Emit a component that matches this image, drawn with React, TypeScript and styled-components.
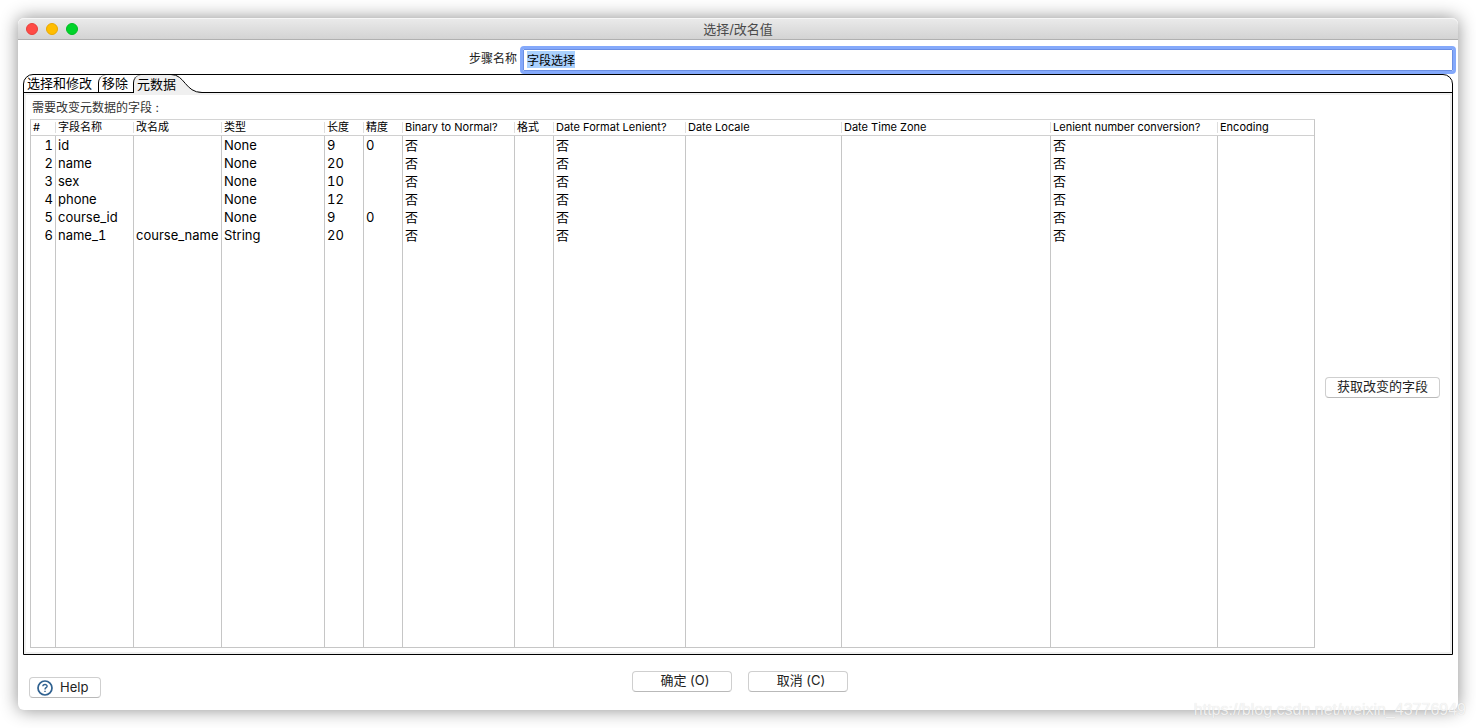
import React, { useEffect, useRef } from "react";
import styled, { createGlobalStyle } from "styled-components";

const GlobalStyle = createGlobalStyle`
  *, *::before, *::after { box-sizing: border-box; }
  body {
    margin: 0;
    background: #fff;
    color: #000;
    font-family: Inter, "Noto Sans CJK SC", sans-serif;
    font-size: 13px;
  }
`;

const Desktop = styled.div`
  position: relative;
  display: flex;
  min-height: 100vh;
  padding: 18px;
  overflow: hidden;
`;

const Window = styled.main`
  flex: 1;
  min-width: 0;
  display: flex;
  flex-direction: column;
  border-radius: 6px;
  background: #fff;
  box-shadow: 0 0 18px rgba(0, 0, 0, 0.45);
`;

const TitleBar = styled.header`
  position: relative;
  display: flex;
  align-items: center;
  justify-content: center;
  height: 22px;
  border-bottom: 1px solid #b0b0b0;
  border-radius: 6px 6px 0 0;
  background: linear-gradient(#ebebeb, #d3d3d3);
  box-shadow: inset 0 1px 0 #f6f6f6;
`;

const Title = styled.h1`
  margin: 0;
  font-size: 13px;
  font-weight: 400;
  line-height: 20px;
  color: #4a4a4a;
`;

const Lights = styled.div`
  position: absolute;
  left: 8px;
  top: 5px;
  display: flex;
  gap: 8px;
`;

const Light = styled.button<{ $fill: string; $edge: string }>`
  width: 12px;
  height: 12px;
  padding: 0;
  border: 1px solid ${(p) => p.$edge};
  border-radius: 50%;
  background: ${(p) => p.$fill};
`;

const NameRow = styled.div`
  display: flex;
  align-items: flex-start;
  gap: 6px;
  padding: 9px 5px 3px;
`;

const NameLabel = styled.label`
  width: 494px;
  text-align: right;
  font-size: 12px;
  line-height: 20px;
  color: #222;
`;

const NameInput = styled.input`
  flex: 1;
  min-width: 0;
  height: 22px;
  padding: 0 3px 2px;
  border: 1px solid #6b8fe3;
  outline: 3px solid #84a9fb;
  border-radius: 1px;
  background: #fff;
  color: #000;
  font-family: inherit;
  font-size: 12px;
  line-height: 16px;
  &::selection { background: #a9d0fd; color: #000; }
`;

const Folder = styled.section`
  flex: 1;
  display: flex;
  flex-direction: column;
  margin: 0 5px;
  border: 1px solid #000;
  border-radius: 10px 10px 0 0;
`;

const TabList = styled.div`
  display: flex;
  height: 18px;
  border-bottom: 1px solid #000;
`;

const Tab = styled.button<{ $active?: boolean; $first?: boolean }>`
  position: relative;
  height: ${(p) => (p.$active ? 18 : 17)}px;
  padding: 0 ${(p) => (p.$active ? 0 : p.$first ? 6 : 5)}px 0 3px;
  border: 0;
  border-left: ${(p) => (p.$first ? 0 : 1)}px solid #000;
  border-radius: 8px 0 0 0;
  background: ${(p) => (p.$active ? "#f0f0f0" : "transparent")};
  color: #000;
  font-family: inherit;
  font-size: 13px;
  white-space: nowrap;
`;

const TabText = styled.span`
  position: relative;
  z-index: 1;
  display: block;
  height: 17px;
  line-height: 16px;
`;

const TabTail = styled.svg`
  position: absolute;
  left: 34px;
  top: -1px;
  width: 34px;
  height: 19px;
`;

const Panel = styled.div`
  flex: 1;
  display: flex;
  flex-direction: column;
  padding: 4px 10px 4px 4px;
  border: 2px solid #f0f0f0;
`;

const Caption = styled.h2`
  height: 20px;
  margin: 0;
  padding: 0 2px;
  font-size: 12px;
  font-weight: 400;
  line-height: 18px;
  color: #333;
`;

const Body = styled.div`
  flex: 1;
  display: flex;
  gap: 10px;
`;

const Grid = styled.table`
  flex: 1;
  min-width: 0;
  table-layout: fixed;
  border-collapse: separate;
  border-spacing: 0;
  border: 1px solid #c6c6c6;
  border-top-color: #d4d4d4;
`;

const HeadCell = styled.th`
  position: relative;
  height: 16px;
  padding: 0 2px;
  border-bottom: 1px solid #d0d0d0;
  text-align: left;
  font-size: 11px;
  font-weight: 400;
  line-height: 15px;
  white-space: nowrap;
  &:not(:last-child)::after {
    content: "";
    position: absolute;
    right: 0;
    top: 2px;
    bottom: 2px;
    border-right: 1px solid #dedede;
  }
`;

const Cell = styled.td<{ $number?: boolean }>`
  height: 18px;
  padding: 0 2px;
  text-align: ${(p) => (p.$number ? "right" : "left")};
  font-size: 13px;
  font-variant-numeric: tabular-nums;
  line-height: 18px;
  white-space: nowrap;
  &:not(:last-child) { border-right: 1px solid #c6c6c6; }
`;

const FillCell = styled.td`
  padding: 0;
  &:not(:last-child) { border-right: 1px solid #c6c6c6; }
`;

const Side = styled.div`
  display: flex;
  align-items: center;
  padding-top: 8px;
`;

const PushButton = styled.button<{ $wide?: boolean }>`
  display: flex;
  align-items: center;
  justify-content: center;
  height: 21px;
  min-width: ${(p) => (p.$wide ? 100 : 0)}px;
  padding: 0 11px 3px ${(p) => (p.$wide ? 17 : 11)}px;
  border: 1px solid #cfcfcf;
  border-bottom-color: #b9b9b9;
  border-radius: 4px;
  background: #fff;
  color: #222;
  font-family: inherit;
  font-size: 13px;
  line-height: 16px;
  white-space: nowrap;
`;

const HelpButton = styled(PushButton)`
  justify-self: start;
  gap: 7px;
  margin-top: 6px;
  padding: 0 12px 0 7px;
`;

const HelpText = styled.span`
  height: 18px;
`;

const Footer = styled.footer`
  display: grid;
  grid-template-columns: 1fr auto 1fr;
  align-items: start;
  padding: 16px 7px 12px 11px;
`;

const Actions = styled.div`
  display: flex;
  gap: 16px;
`;

const Watermark = styled.div`
  position: absolute;
  right: 10px;
  top: 700px;
  font-family: "Liberation Sans", sans-serif;
  font-size: 16px;
  line-height: 20px;
  color: rgba(250, 250, 250, 0.85);
  text-shadow: 0 0 1px rgba(0, 0, 0, 0.14);
  white-space: nowrap;
`;

const columns: { title: string; width?: number }[] = [
  { title: "#", width: 25 },
  { title: "字段名称", width: 78 },
  { title: "改名成", width: 88 },
  { title: "类型", width: 103 },
  { title: "长度", width: 39 },
  { title: "精度", width: 39 },
  { title: "Binary to Normal?", width: 112 },
  { title: "格式", width: 39 },
  { title: "Date Format Lenient?", width: 132 },
  { title: "Date Locale", width: 156 },
  { title: "Date Time Zone", width: 209 },
  { title: "Lenient number conversion?", width: 167 },
  { title: "Encoding" },
];

const fields = [
  ["id", "", "None", "9", "0"],
  ["name", "", "None", "20", ""],
  ["sex", "", "None", "10", ""],
  ["phone", "", "None", "12", ""],
  ["course_id", "", "None", "9", "0"],
  ["name_1", "course_name", "String", "20", ""],
].map((f, i) => [String(i + 1), ...f, "否", "", "否", "", "", "否", ""]);

export default function App() {
  const nameRef = useRef<HTMLInputElement>(null);

  useEffect(() => {
    nameRef.current?.focus();
    nameRef.current?.select();
  }, []);

  return (
    <Desktop>
      <GlobalStyle />
      <Window>
        <TitleBar>
          <Lights>
            <Light $fill="#ff4b46" $edge="#e8403b" aria-label="关闭" />
            <Light $fill="#ffbd00" $edge="#e9a800" aria-label="最小化" />
            <Light $fill="#00d42a" $edge="#00bd22" aria-label="缩放" />
          </Lights>
          <Title>选择/改名值</Title>
        </TitleBar>

        <NameRow>
          <NameLabel htmlFor="step-name">步骤名称</NameLabel>
          <NameInput id="step-name" ref={nameRef} defaultValue="字段选择" />
        </NameRow>

        <Folder>
          <TabList role="tablist">
            <Tab role="tab" aria-selected={false} $first>
              <TabText>选择和修改</TabText>
            </Tab>
            <Tab role="tab" aria-selected={false}>
              <TabText>移除</TabText>
            </Tab>
            <Tab role="tab" aria-selected $active>
              <TabTail viewBox="0 0 34 19" aria-hidden="true">
                <path d="M0 1H3C17 1 17 18.500 34 18.500V19H0Z" fill="#f0f0f0" />
                <path d="M0 .5H3C17 .5 17 18.500 34 18.500" fill="none" stroke="#000" />
              </TabTail>
              <TabText>元数据</TabText>
            </Tab>
          </TabList>
          <Panel role="tabpanel">
            <Caption>需要改变元数据的字段 :</Caption>
            <Body>
              <Grid>
                <colgroup>
                  {columns.map((c) => (
                    <col key={c.title} width={c.width} />
                  ))}
                </colgroup>
                <thead>
                  <tr>
                    {columns.map((c) => (
                      <HeadCell key={c.title} scope="col">{c.title}</HeadCell>
                    ))}
                  </tr>
                </thead>
                <tbody>
                  {fields.map((row) => (
                    <tr key={row[0]}>
                      {row.map((value, i) => (
                        <Cell key={i} $number={i === 0}>{value}</Cell>
                      ))}
                    </tr>
                  ))}
                  <tr aria-hidden="true">
                    {columns.map((c) => (
                      <FillCell key={c.title} />
                    ))}
                  </tr>
                </tbody>
              </Grid>
              <Side>
                <PushButton>获取改变的字段</PushButton>
              </Side>
            </Body>
          </Panel>
        </Folder>

        <Footer>
          <HelpButton>
            <svg width="16" height="16" viewBox="0 0 16 16" aria-hidden="true">
              <circle cx="8" cy="8" r="7" fill="none" stroke="#2f6190" strokeWidth="1.700" />
              <path
                d="M5.900 6.300C5.900 3.800 10.200 3.900 10.100 6.300C10 7.700 8 7.700 8 9.400M8 10.700V12"
                fill="none"
                stroke="#2f6190"
                strokeWidth="1.400"
              />
            </svg>
            <HelpText>Help</HelpText>
          </HelpButton>
          <Actions>
            <PushButton $wide>确定 (O)</PushButton>
            <PushButton $wide>取消 (C)</PushButton>
          </Actions>
        </Footer>
      </Window>
      <Watermark>https://blog.csdn.net/weixin_43776949</Watermark>
    </Desktop>
  );
}
